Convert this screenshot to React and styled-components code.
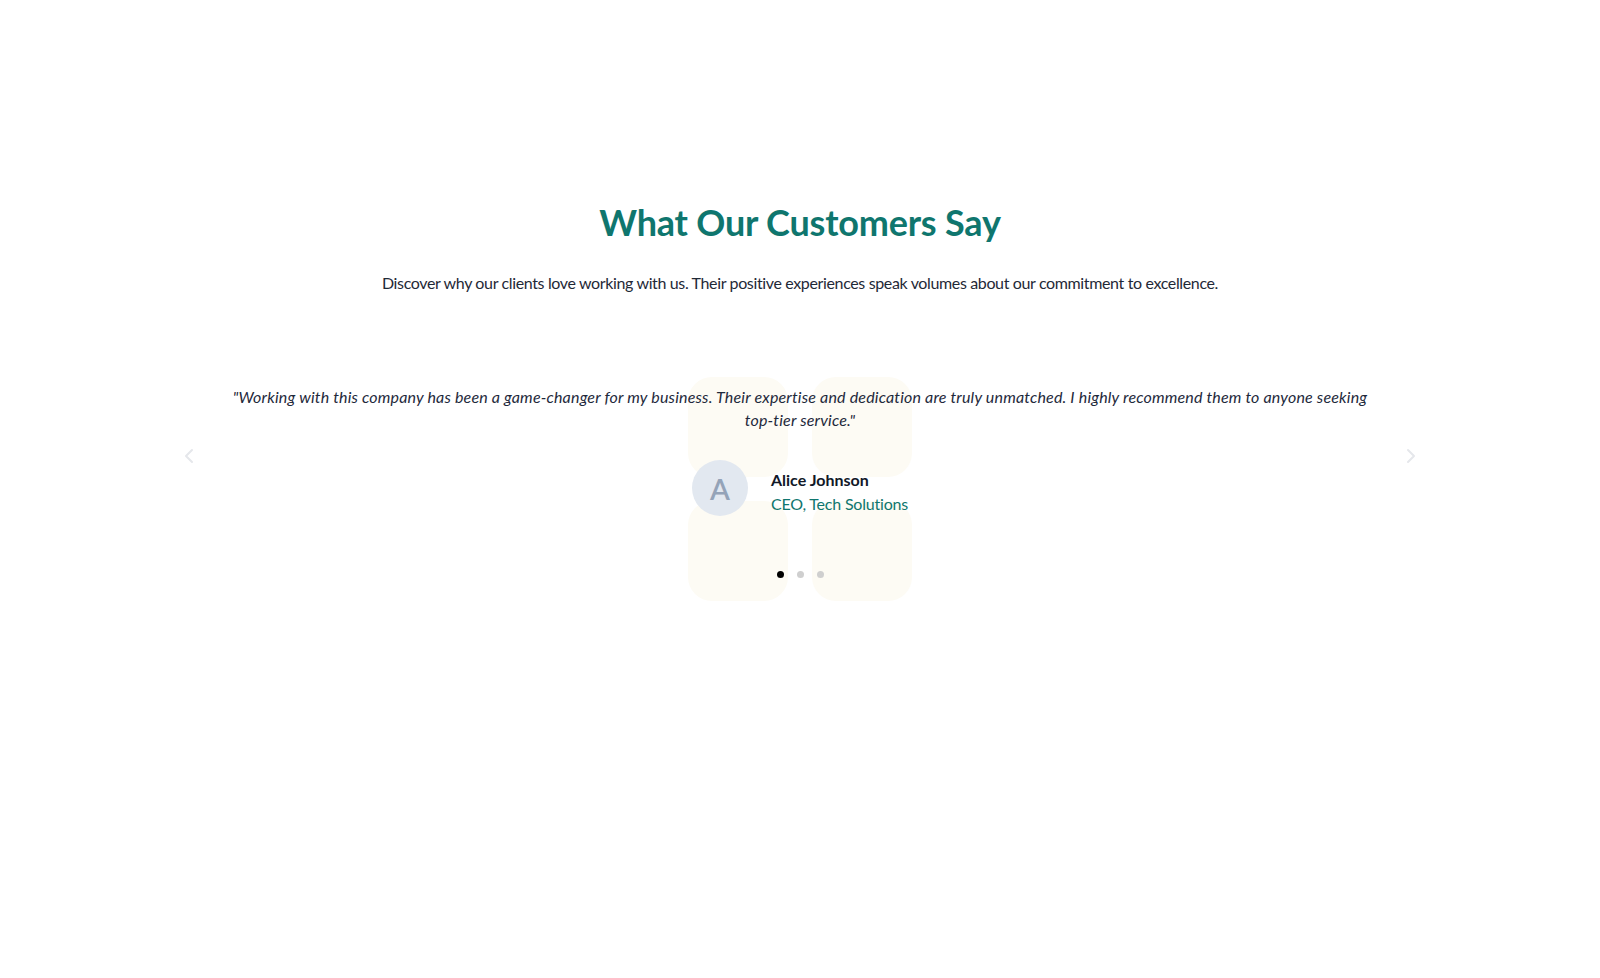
import React, { useState } from 'react';
import styled, { createGlobalStyle } from 'styled-components';
import { ChevronLeft, ChevronRight } from 'lucide-react';

const GlobalStyle = createGlobalStyle`
  html, body {
    margin: 0;
    padding: 0;
    background: #ffffff;
  }
  body {
    font-family: Lato, "Noto Sans", sans-serif;
    color: #1f2937;
  }
`;

const testimonials = [
  {
    id: 1,
    quote: '"Working with this company has been a game-changer for my business. Their expertise and dedication are truly unmatched. I highly recommend them to anyone seeking top-tier service."',
    name: 'Alice Johnson',
    role: 'CEO, Tech Solutions',
  },
  {
    id: 2,
    quote: '"The team went above and beyond to deliver exactly what we needed, on time and on budget."',
    name: 'Brian Lee',
    role: 'Founder, Brightside',
  },
  {
    id: 3,
    quote: '"Outstanding support and a genuinely friendly crew. We will be coming back for more."',
    name: 'Carla Mendes',
    role: 'COO, Northwind',
  },
];

const Section = styled.section`
  min-height: 978px;
  box-sizing: border-box;
  padding: 198px 24px 0;
`;

const Header = styled.header`
  display: flex;
  flex-direction: column;
  align-items: center;
  text-align: center;
`;

const Title = styled.h2`
  margin: 0;
  font-size: 36px;
  line-height: 48px;
  font-weight: 700;
  color: #0f766e;
  letter-spacing: -0.2px;
`;

const Subtitle = styled.p`
  margin: 25px 0 0;
  font-size: 16px;
  line-height: 24px;
  letter-spacing: -0.36px;
  color: #1f2937;
`;

const Carousel = styled.div`
  position: relative;
  width: 1260px;
  margin: 90px auto 0;
  display: flex;
  flex-direction: column;
  align-items: center;
`;

// decorative 2x2 backdrop behind the active slide
const Pattern = styled.div`
  position: absolute;
  top: -8px;
  left: 50%;
  transform: translateX(-50%);
  display: grid;
  grid-template-columns: repeat(2, 100px);
  grid-template-rows: repeat(2, 100px);
  gap: 24px;
  z-index: 0;
`;

const Tile = styled.div`
  border-radius: 24px;
  background: #fdfbf4;
`;

const Slide = styled.div`
  position: relative;
  z-index: 1;
  width: 1150px;
  display: flex;
  flex-direction: column;
  align-items: center;
`;

const Quote = styled.p`
  margin: 0;
  font-size: 16px;
  line-height: 23px;
  letter-spacing: 0.18px;
  font-style: italic;
  text-align: center;
  color: #1e293b;
`;

const Author = styled.div`
  display: flex;
  align-items: center;
  gap: 23px;
  margin-top: 29px;
`;

const Avatar = styled.div`
  width: 56px;
  height: 56px;
  border-radius: 50%;
  background: #e2e8f0;
  color: #94a3b8;
  display: flex;
  align-items: center;
  justify-content: center;
  font-size: 29px;
  font-weight: 600;
`;

const AuthorText = styled.div`
  display: flex;
  flex-direction: column;
  padding-top: 8px;
`;

const Name = styled.span`
  font-size: 16px;
  line-height: 24px;
  font-weight: 700;
  color: #111827;
`;

const Role = styled.span`
  font-size: 16px;
  line-height: 24px;
  letter-spacing: -0.2px;
  color: #0f766e;
`;

const Dots = styled.div`
  position: relative;
  z-index: 1;
  display: flex;
  gap: 13px;
  margin-top: 55px;
`;

const Dot = styled.button`
  width: 7px;
  height: 7px;
  padding: 0;
  border: none;
  border-radius: 50%;
  cursor: pointer;
  background: ${({ $active }) => ($active ? '#000000' : '#cfcfcf')};
`;

const Arrow = styled.button`
  position: absolute;
  top: 57px;
  ${({ $side }) => ($side === 'left' ? 'left: 5px;' : 'right: 5px;')}
  width: 28px;
  height: 28px;
  padding: 0;
  border: none;
  background: transparent;
  color: #e5e7eb;
  display: flex;
  align-items: center;
  justify-content: center;
  cursor: pointer;
  z-index: 2;
`;

export default function App() {
  const [index, setIndex] = useState(0);
  const current = testimonials[index];
  const count = testimonials.length;

  return (
    <>
      <GlobalStyle />
      <Section>
        <Header>
          <Title>What Our Customers Say</Title>
          <Subtitle>
            Discover why our clients love working with us. Their positive experiences speak volumes about our commitment to excellence.
          </Subtitle>
        </Header>
        <Carousel>
          <Pattern aria-hidden="true">
            <Tile />
            <Tile />
            <Tile />
            <Tile />
          </Pattern>
          <Arrow $side="left" onClick={() => setIndex((index - 1 + count) % count)} aria-label="Previous">
            <ChevronLeft size={24} strokeWidth={2} />
          </Arrow>
          <Slide key={current.id}>
            <Quote>{current.quote}</Quote>
            <Author>
              <Avatar>{current.name.charAt(0)}</Avatar>
              <AuthorText>
                <Name>{current.name}</Name>
                <Role>{current.role}</Role>
              </AuthorText>
            </Author>
          </Slide>
          <Arrow $side="right" onClick={() => setIndex((index + 1) % count)} aria-label="Next">
            <ChevronRight size={24} strokeWidth={2} />
          </Arrow>
          <Dots>
            {testimonials.map((t, i) => (
              <Dot key={t.id} $active={i === index} onClick={() => setIndex(i)} aria-label={`Slide ${i + 1}`} />
            ))}
          </Dots>
        </Carousel>
      </Section>
    </>
  );
}
